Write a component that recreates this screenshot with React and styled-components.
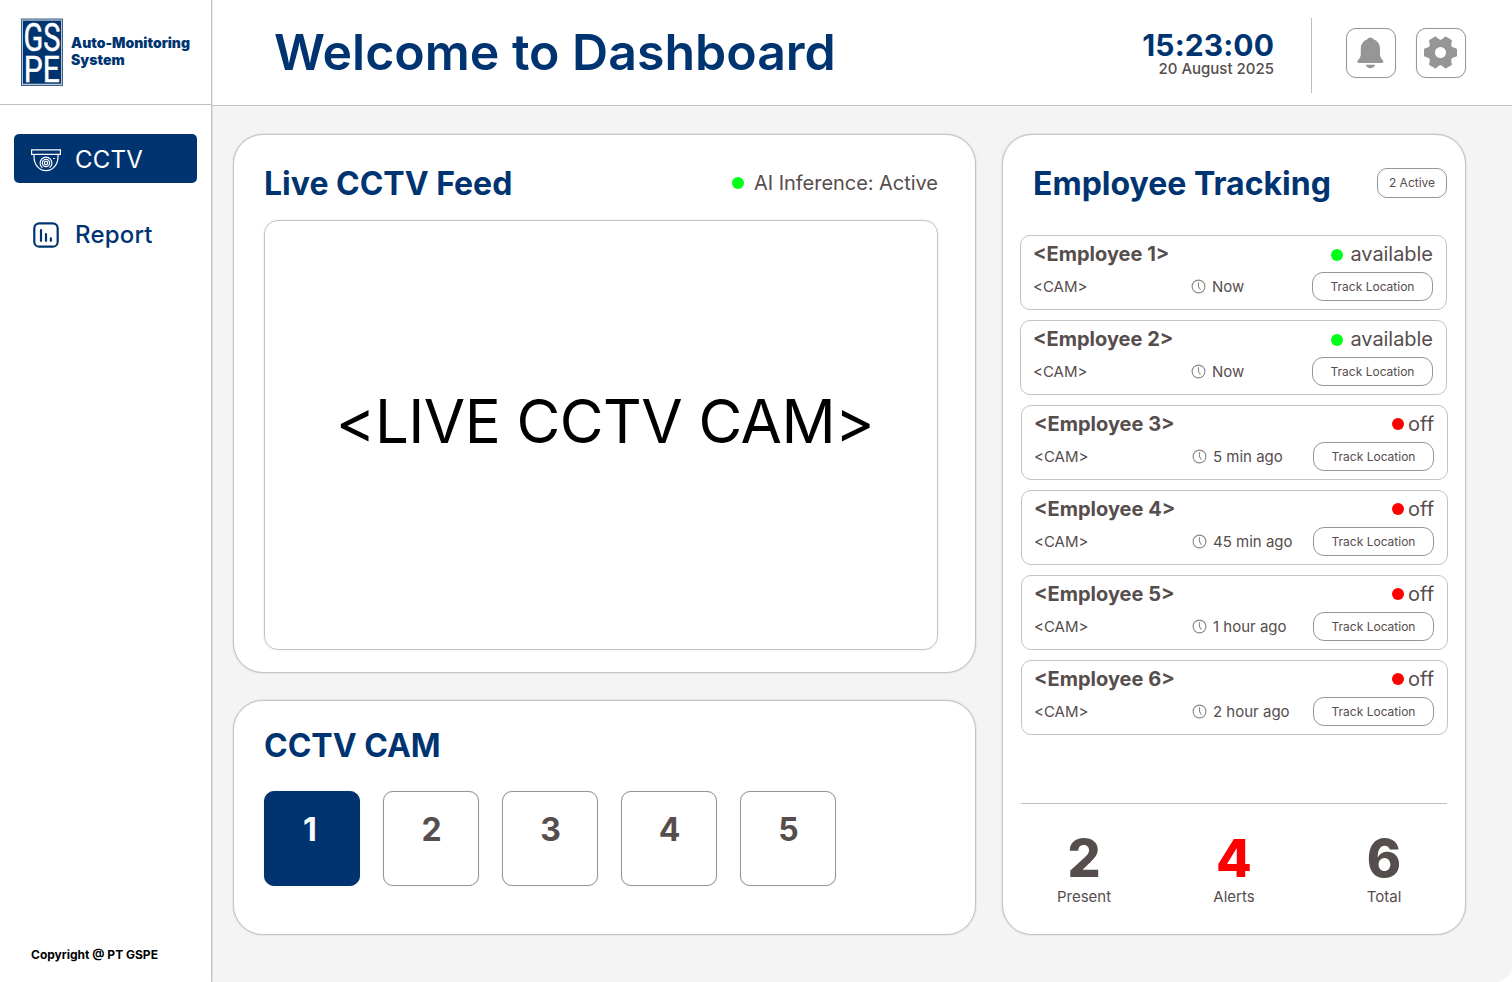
import React from 'react';
import styled, { createGlobalStyle } from 'styled-components';

const navy = '#003471';
const ink = '#564d4d';

const GlobalStyle = createGlobalStyle`
  *, *::before, *::after { box-sizing: border-box; }
  body { margin: 0; background: #fff; font-family: Inter, sans-serif; }
  h1, h2, p { margin: 0; }
  button { font-family: inherit; background: none; padding: 0; margin: 0; }
`;

const Shell = styled.div`
  display: flex;
  width: 1512px;
  height: 982px;
  overflow: hidden;
  background: #fff;
`;

const Sidebar = styled.aside`
  position: relative;
  z-index: 1;
  flex: none;
  width: 212px;
  display: flex;
  flex-direction: column;
  background: #fff;
  border-right: 1px solid #c0c0c0;
  box-shadow: 0 0 2px rgba(0, 0, 0, 0.2);
`;

const Brand = styled.div`
  height: 105px;
  flex: none;
  display: flex;
  align-items: center;
  padding-left: 21px;
  gap: 8px;
  border-bottom: 1px solid #bdbdbd;
`;

const BrandName = styled.p`
  padding-bottom: 2px;
  font-size: 14px;
  line-height: 17px;
  font-weight: 900;
  color: ${navy};
  white-space: nowrap;
`;

const Nav = styled.nav`
  padding: 29px 14px 0;
  display: flex;
  flex-direction: column;
  gap: 27px;
  flex: 1;
`;

const NavItem = styled.a`
  display: flex;
  align-items: center;
  width: 183px;
  height: 49px;
  padding: ${(p) => (p.$active ? 2 : 0)}px 0 0 16px;
  gap: 13px;
  border-radius: 5px;
  font-size: 24px;
  line-height: 30px;
  letter-spacing: 0.2px;
  font-weight: ${(p) => (p.$active ? 400 : 500)};
  color: ${(p) => (p.$active ? '#fff' : navy)};
  background: ${(p) => (p.$active ? navy : 'transparent')};
`;

const Copyright = styled.p`
  padding: 0 0 20px 31px;
  font-size: 12px;
  line-height: 15px;
  font-weight: 700;
  color: #000;
`;

const Content = styled.div`
  flex: 1;
  display: flex;
  flex-direction: column;
`;

const Header = styled.header`
  flex: none;
  height: 106px;
  display: flex;
  align-items: center;
  padding: 0 46px 0 62px;
  background: #fff;
  border-bottom: 1px solid #c4c4c4;
  box-shadow: 0 0 2px rgba(0, 0, 0, 0.2);
`;

const PageTitle = styled.h1`
  flex: 1;
  padding-bottom: 2px;
  font-size: 50px;
  line-height: 60px;
  font-weight: 600;
  color: ${navy};
`;

const Clock = styled.div`
  text-align: right;
  padding: 1px 37px 0 0;
`;

const Time = styled.p`
  font-size: 30px;
  line-height: 32px;
  letter-spacing: 0.1px;
  font-weight: 700;
  color: ${navy};
`;

const DateText = styled.p`
  font-size: 15px;
  line-height: 16px;
  font-weight: 500;
  color: ${ink};
`;

const HeaderRule = styled.div`
  width: 1px;
  height: 75px;
  margin: 6px 34px 0 0;
  background: #bdbdbd;
`;

const IconButton = styled.button`
  width: 50px;
  height: 50px;
  display: flex;
  align-items: center;
  justify-content: center;
  border: 1px solid #969696;
  border-radius: 10px;
  box-shadow: 0 0 1px rgba(0, 0, 0, 0.25);
  & + & { margin-left: 20px; }
`;

const Board = styled.main`
  flex: 1;
  display: grid;
  grid-template-columns: 743px 464px;
  grid-template-rows: 539px 235px;
  gap: 27px 26px;
  padding: 28px 0 0 21px;
  background: #f4f4f4;
  border-bottom-right-radius: 16px;
`;

const Panel = styled.section`
  display: flex;
  flex-direction: column;
  background: #fff;
  border: 1px solid #c4c4c4;
  border-radius: 30px;
  box-shadow: 0 0 2px rgba(0, 0, 0, 0.2);
  padding: ${(p) => p.$pad};
  grid-row: ${(p) => p.$rows || 'auto'};
  grid-column: ${(p) => p.$column || 'auto'};
`;

const PanelHead = styled.div`
  display: flex;
  align-items: center;
  justify-content: space-between;
  height: 40px;
  flex: none;
`;

const PanelTitle = styled.h2`
  padding-top: 2px;
  font-size: 32px;
  line-height: 40px;
  font-weight: 700;
  color: ${navy};
  white-space: nowrap;
`;

const Status = styled.div`
  display: flex;
  align-items: center;
  gap: ${(p) => p.$gap}px;
  font-size: 20px;
  line-height: 24px;
  letter-spacing: -0.04px;
  color: ${ink};
  white-space: nowrap;
`;

const Dot = styled.span`
  width: 12px;
  height: 12px;
  margin-top: ${(p) => p.$drop || 0}px;
  border-radius: 50%;
  background: ${(p) => (p.$on ? '#00ff19' : '#ff0000')};
`;

const Feed = styled.div`
  margin-top: 17px;
  height: 430px;
  display: flex;
  align-items: center;
  justify-content: center;
  padding: 0 0 28px 8px;
  border: 1px solid #c4c4c4;
  border-radius: 14px;
  box-shadow: 0 0 2px rgba(0, 0, 0, 0.15);
  font-size: 60px;
  letter-spacing: -0.55px;
  color: #000;
  white-space: nowrap;
`;

const Cameras = styled.div`
  display: flex;
  gap: 23px;
  margin-top: 25px;
`;

const CameraButton = styled.button`
  width: 96px;
  height: 95px;
  padding: 0 ${(p) => (p.$active ? 4 : 0)}px 18px ${(p) => (p.$active ? 0 : 1)}px;
  border-radius: 10px;
  border: 1px solid ${(p) => (p.$active ? navy : '#969696')};
  background: ${(p) => (p.$active ? navy : '#fff')};
  box-shadow: 0 0 1px rgba(0, 0, 0, 0.25);
  color: ${(p) => (p.$active ? '#fff' : ink)};
  font-size: 32px;
  line-height: 40px;
  font-weight: 700;
`;

const ActiveBadge = styled.span`
  width: 70px;
  height: 30px;
  border: 1px solid #969696;
  border-radius: 10px;
  font-size: 12px;
  line-height: 28px;
  text-align: center;
  color: ${ink};
`;

const TrackingHead = styled(PanelHead)`
  padding: 0 0 0 13px;
`;

const EmployeeList = styled.ul`
  list-style: none;
  margin: 32px 0 0;
  padding: 0;
  display: flex;
  flex-direction: column;
  gap: 10px;
`;

const EmployeeCard = styled.li`
  width: 427px;
  height: 75px;
  padding: 6px 13px 8px 12px;
  margin-left: ${(p) => (p.$on ? 0 : 1)}px;
  border: 1px solid #c4c4c4;
  border-radius: 10px;
  display: flex;
  flex-direction: column;
  justify-content: space-between;
  color: ${ink};
`;

const CardTop = styled.div`
  display: flex;
  justify-content: space-between;
`;

const EmployeeName = styled.span`
  font-size: 20px;
  line-height: 24px;
  font-weight: 700;
`;

const CardBottom = styled.div`
  display: grid;
  grid-template-columns: 158px 1fr 121px;
  align-items: center;
  font-size: 15px;
  line-height: 18px;
`;

const LastSeen = styled.span`
  display: flex;
  align-items: center;
  gap: 6px;
  white-space: nowrap;
`;

const TrackButton = styled.button`
  height: 29px;
  border: 1px solid #969696;
  border-radius: 11px;
  font-size: 12px;
  line-height: 27px;
  color: ${ink};
`;

const Stats = styled.div`
  margin-top: auto;
  width: 426px;
  margin-left: 1px;
  padding: 30px 0 28px;
  display: grid;
  grid-template-columns: 126px 174px 126px;
  border-top: 1px solid #bdbdbd;
  text-align: center;
`;

const StatValue = styled.p`
  font-size: 52px;
  line-height: 50px;
  font-weight: 800;
  color: ${(p) => (p.$alert ? '#ff0000' : ink)};
`;

const StatLabel = styled.p`
  margin-top: 4px;
  font-size: 15px;
  line-height: 18px;
  color: ${ink};
`;

const LogoSvg = styled.svg`
  display: block;
  overflow: visible;
`;

const LogoMark = () => (
  <LogoSvg width="42" height="68" viewBox="0 0 42 68">
    <rect x="0.500" y="1" width="41" height="66.500" fill="#b9c6d6" stroke="#3f5f88" />
    <rect x="2" y="2.700" width="38" height="63" fill={navy} />
    <g fill="#fff" stroke="#fff" strokeWidth="0.500" fontFamily="Roboto, sans-serif">
      <text x="2.500" y="33" fontSize="39" textLength="37" lengthAdjust="spacingAndGlyphs">GS</text>
      <text x="2.800" y="63.500" fontSize="37" textLength="36" lengthAdjust="spacingAndGlyphs">PE</text>
    </g>
  </LogoSvg>
);

const DomeCameraIcon = () => (
  <svg width="32" height="24" viewBox="0 0 32 24" fill="none" stroke="#fff" strokeWidth="1.200">
    <path d="M1.600 1.900h28.800v4.400H1.600z" />
    <path d="M4 6.500v2.200C4 16.500 9.200 22.700 16 22.700S28 16.500 28 8.700V6.500" />
    <path d="M12.500 19.800a5.900 5.900 0 1 1 7 0" />
    <circle cx="16" cy="15" r="3.600" />
    <circle cx="16" cy="15" r="1.700" />
    <path d="M23 10.500h1.800" />
  </svg>
);

const ReportIcon = () => (
  <svg width="32" height="28" viewBox="0 0 32 28" fill="none" stroke={navy} strokeWidth="2.200" strokeLinecap="round">
    <rect x="4.300" y="2.300" width="23.400" height="23.400" rx="5" />
    <path d="M11 9.200v10.600M16 13.200v6.600M20.900 17.300v2.500" />
  </svg>
);

const BellIcon = () => (
  <svg width="28" height="32" viewBox="0.6 0.2 28 32" fill="#969696">
    <path d="M14 .6c1.600 0 2.700.8 3.300 2 3.800 1.300 6.300 4.700 6.300 9v5.600c0 2.300.8 4 2.600 5.900.5.500.8 1 .8 1.600 0 .8-.6 1.400-1.500 1.400h-23c-.9 0-1.500-.6-1.500-1.400 0-.6.300-1.100.8-1.600 1.800-1.900 2.600-3.600 2.600-5.900v-5.600c0-4.300 2.500-7.700 6.300-9 .6-1.200 1.700-2 3.300-2z" />
    <path d="M9.200 28h9.600c-.9 2-2.600 3.400-4.800 3.400S10.100 30 9.200 28z" />
  </svg>
);

const toothProfile = [
  [10.8, -4.8],
  [12.8, -3.9],
  [15.4, -3],
  [15.4, 3],
  [12.8, 3.9],
  [10.8, 4.8],
];

const gearPoints = [0, 60, 120, 180, 240, 300]
  .flatMap((deg) => {
    const a = (deg * Math.PI) / 180;
    return toothProfile.map(([x, y]) =>
      [x * Math.cos(a) - y * Math.sin(a), x * Math.sin(a) + y * Math.cos(a)]
        .map((v) => v.toFixed(2))
        .join(',')
    );
  })
  .join(' ');

const GearIcon = () => (
  <svg width="34" height="34" viewBox="-16.5 -16.5 34 34">
    <polygon points={gearPoints} fill="#969696" stroke="#969696" strokeWidth="2.200" strokeLinejoin="round" />
    <circle r="5.500" fill="#fff" />
  </svg>
);

const ClockIcon = () => (
  <svg width="15" height="15" viewBox="0 0 15 15" fill="none" stroke="#8c8888" strokeWidth="1.100">
    <circle cx="7.500" cy="7.500" r="6.400" />
    <path d="M7.500 3.500v4.200l1.700 2.500" strokeLinecap="round" />
  </svg>
);

const employees = [
  { name: '<Employee 1>', on: true, seen: 'Now' },
  { name: '<Employee 2>', on: true, seen: 'Now' },
  { name: '<Employee 3>', on: false, seen: '5 min ago' },
  { name: '<Employee 4>', on: false, seen: '45 min ago' },
  { name: '<Employee 5>', on: false, seen: '1 hour ago' },
  { name: '<Employee 6>', on: false, seen: '2 hour ago' },
];

const stats = [
  { value: 2, label: 'Present' },
  { value: 4, label: 'Alerts', alert: true },
  { value: 6, label: 'Total' },
];

export default function App() {
  return (
    <Shell>
      <GlobalStyle />
      <Sidebar>
        <Brand>
          <LogoMark />
          <BrandName>Auto-Monitoring<br />System</BrandName>
        </Brand>
        <Nav>
          <NavItem $active><DomeCameraIcon />CCTV</NavItem>
          <NavItem><ReportIcon />Report</NavItem>
        </Nav>
        <Copyright>Copyright @ PT GSPE</Copyright>
      </Sidebar>
      <Content>
        <Header>
          <PageTitle>Welcome to Dashboard</PageTitle>
          <Clock>
            <Time>15:23:00</Time>
            <DateText>20 August 2025</DateText>
          </Clock>
          <HeaderRule />
          <IconButton aria-label="Notifications"><BellIcon /></IconButton>
          <IconButton aria-label="Settings"><GearIcon /></IconButton>
        </Header>
        <Board>
          <Panel $pad="28px 37px 0 30px">
            <PanelHead>
              <PanelTitle>Live CCTV Feed</PanelTitle>
              <Status $gap={10}><Dot $on />AI Inference: Active</Status>
            </PanelHead>
            <Feed>&lt;LIVE CCTV CAM&gt;</Feed>
          </Panel>
          <Panel $pad="28px 18px 0 17px" $rows="1 / 3" $column="2">
            <TrackingHead>
              <PanelTitle>Employee Tracking</PanelTitle>
              <ActiveBadge>2 Active</ActiveBadge>
            </TrackingHead>
            <EmployeeList>
              {employees.map((e) => (
                <EmployeeCard key={e.name} $on={e.on}>
                  <CardTop>
                    <EmployeeName>{e.name}</EmployeeName>
                    <Status $gap={e.on ? 7 : 4}>
                      <Dot $on={e.on} $drop={e.on ? 2 : 0} />
                      {e.on ? 'available' : 'off'}
                    </Status>
                  </CardTop>
                  <CardBottom>
                    <span>&lt;CAM&gt;</span>
                    <LastSeen><ClockIcon />{e.seen}</LastSeen>
                    <TrackButton>Track Location</TrackButton>
                  </CardBottom>
                </EmployeeCard>
              ))}
            </EmployeeList>
            <Stats>
              {stats.map((s) => (
                <div key={s.label}>
                  <StatValue $alert={s.alert}>{s.value}</StatValue>
                  <StatLabel>{s.label}</StatLabel>
                </div>
              ))}
            </Stats>
          </Panel>
          <Panel $pad="23px 30px 0">
            <PanelTitle>CCTV CAM</PanelTitle>
            <Cameras>
              {[1, 2, 3, 4, 5].map((n) => (
                <CameraButton key={n} $active={n === 1}>{n}</CameraButton>
              ))}
            </Cameras>
          </Panel>
        </Board>
      </Content>
    </Shell>
  );
}
